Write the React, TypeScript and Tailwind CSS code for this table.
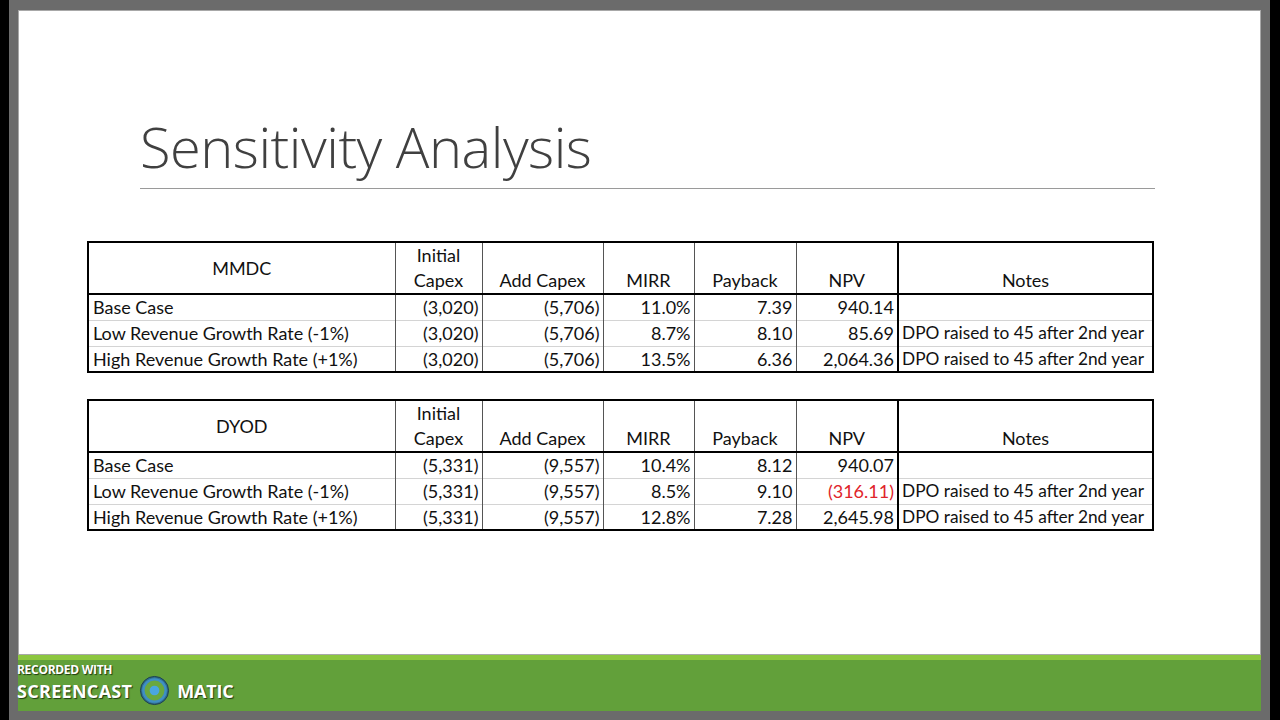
import React from "react";

type Row = {
  label: string;
  capex: string;
  add: string;
  mirr: string;
  payback: string;
  npv: string;
  neg?: boolean;
  note?: string;
};

const NOTE = "DPO raised to 45 after 2nd year";

const mmdc: Row[] = [
  { label: "Base Case", capex: "(3,020)", add: "(5,706)", mirr: "11.0%", payback: "7.39", npv: "940.14" },
  { label: "Low Revenue Growth Rate (-1%)", capex: "(3,020)", add: "(5,706)", mirr: "8.7%", payback: "8.10", npv: "85.69", note: NOTE },
  { label: "High Revenue Growth Rate (+1%)", capex: "(3,020)", add: "(5,706)", mirr: "13.5%", payback: "6.36", npv: "2,064.36", note: NOTE },
];

const dyod: Row[] = [
  { label: "Base Case", capex: "(5,331)", add: "(9,557)", mirr: "10.4%", payback: "8.12", npv: "940.07" },
  { label: "Low Revenue Growth Rate (-1%)", capex: "(5,331)", add: "(9,557)", mirr: "8.5%", payback: "9.10", npv: "(316.11)", neg: true, note: NOTE },
  { label: "High Revenue Growth Rate (+1%)", capex: "(5,331)", add: "(9,557)", mirr: "12.8%", payback: "7.28", npv: "2,645.98", note: NOTE },
];

function SensitivityTable({ name, rows }: { name: string; rows: Row[] }) {
  const num = "text-right pr-[3px] border-l border-l-[#555] whitespace-nowrap";
  const head = "font-normal text-center align-bottom";
  return (
    <table className="w-[1065px] table-fixed border-collapse border-2 border-black text-[18px] leading-[24px] text-[#111]">
      <colgroup>
        <col className="w-[307px]" />
        <col className="w-[87px]" />
        <col className="w-[121px]" />
        <col className="w-[91px]" />
        <col className="w-[102px]" />
        <col className="w-[102px]" />
        <col className="w-[255px]" />
      </colgroup>
      <thead>
        <tr className="h-[50px] border-b-2 border-b-black leading-[25px]">
          <th className="font-normal text-center align-middle">{name}</th>
          <th className={`${head} border-l border-l-[#555]`}>
            Initial
            <br />
            Capex
          </th>
          <th className={`${head} border-l border-l-[#555]`}>Add Capex</th>
          <th className={`${head} border-l border-l-[#555]`}>MIRR</th>
          <th className={`${head} border-l border-l-[#555]`}>Payback</th>
          <th className={`${head} border-l border-l-[#555]`}>NPV</th>
          <th className={`${head} border-l-2 border-l-black`}>Notes</th>
        </tr>
      </thead>
      <tbody>
        {rows.map((r, i) => (
          <tr key={r.label} className={`h-[26px] ${i < rows.length - 1 ? "border-b border-b-[#d4d4d4]" : ""}`}>
            <td className="pl-[4px] whitespace-nowrap">{r.label}</td>
            <td className={num}>{r.capex}</td>
            <td className={num}>{r.add}</td>
            <td className={num}>{r.mirr}</td>
            <td className={num}>{r.payback}</td>
            <td className={`${num} ${r.neg ? "text-[#e0242b]" : ""}`}>{r.npv}</td>
            <td className="pl-[3px] whitespace-nowrap text-[17.3px] border-l-2 border-l-black">{r.note ?? ""}</td>
          </tr>
        ))}
      </tbody>
    </table>
  );
}

function ScreencastLogo() {
  return (
    <div className="flex flex-col -ml-[1px] pt-[3px] text-white font-bold [font-family:'Open_Sans',sans-serif] [text-shadow:1px_1px_1px_#1d3a10]">
      <span className="text-[12px] leading-[14px] tracking-[-0.3px]">RECORDED WITH</span>
      <div className="flex items-center gap-[7px] -mt-[2px]">
        <span className="text-[18px] leading-[22px] tracking-[0.3px]">SCREENCAST</span>
        <svg width="31" height="31" viewBox="0 0 32 32">
          <circle cx="16" cy="16" r="14.5" fill="#2f6f8f" stroke="#1d3d4d" strokeWidth="1" />
          <circle cx="16" cy="16" r="11.5" fill="#6aa83f" stroke="#3f8fc4" strokeWidth="2.5" />
          <circle cx="16" cy="16" r="5" fill="#4aa6e0" />
        </svg>
        <span className="text-[18px] leading-[22px] tracking-[-0.2px]">MATIC</span>
      </div>
    </div>
  );
}

export default function App() {
  return (
    <div className="w-[1280px] h-[720px] bg-black flex">
      <div className="ml-[9px] w-[1261px] h-[720px] bg-[#6b6b6b] flex flex-col pt-[10px] px-[9px] pb-[9px]">
        <div className="h-[645px] bg-white border border-[#a8a8a8] flex flex-col [font-family:Lato,'Open_Sans',sans-serif]">
          <div className="pl-[121px] pt-[98px]">
            <h1 className="text-[56px] leading-[74px] font-light text-[#404040] [font-family:'Open_Sans',sans-serif] tracking-[-0.5px]">
              Sensitivity Analysis
            </h1>
            <div className="mt-[5px] w-[1015px] h-[1px] bg-[#9a9a9a]" />
          </div>
          <div className="pl-[68px] pt-[52px] flex flex-col gap-[26px]">
            <SensitivityTable name="MMDC" rows={mmdc} />
            <SensitivityTable name="DYOD" rows={dyod} />
          </div>
        </div>
        <div className="flex-1 flex flex-col bg-[#62a03a]">
          <div className="h-[5px] bg-[#8cc63f]" />
          <ScreencastLogo />
        </div>
      </div>
    </div>
  );
}
